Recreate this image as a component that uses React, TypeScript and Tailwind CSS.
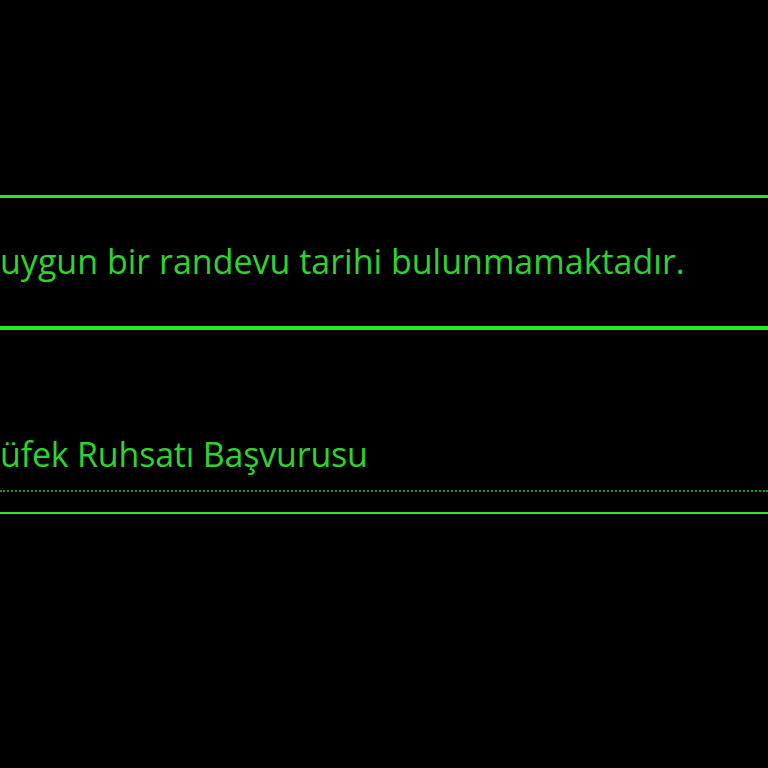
export default function App() {
  return (
    <div className="w-[768px] h-[768px] bg-black overflow-hidden font-['Open_Sans',sans-serif]">
      <div className="pt-[195px]">
        {/* notice box */}
        <div className="border-t-[3px] border-b-[4px] border-t-[#2fdf2f] border-b-[#22f01a] h-[135px] flex items-center">
          <p className="text-[34px] leading-none text-[#30d230] whitespace-nowrap pb-[2px]">
            uygun bir randevu tarihi bulunmamaktadır.
          </p>
        </div>

        {/* application row */}
        <div className="pt-[102px] border-b-2 border-[#2ee62e]">
          <div className="border-b-2 border-dotted border-[#1f9a1f] pb-[14px] mb-[20px]">
            <p className="text-[34px] leading-[44px] text-[#30d230] whitespace-nowrap tracking-[-0.2px]">
              üfek Ruhsatı Başvurusu
            </p>
          </div>
        </div>
      </div>
    </div>
  )
}
